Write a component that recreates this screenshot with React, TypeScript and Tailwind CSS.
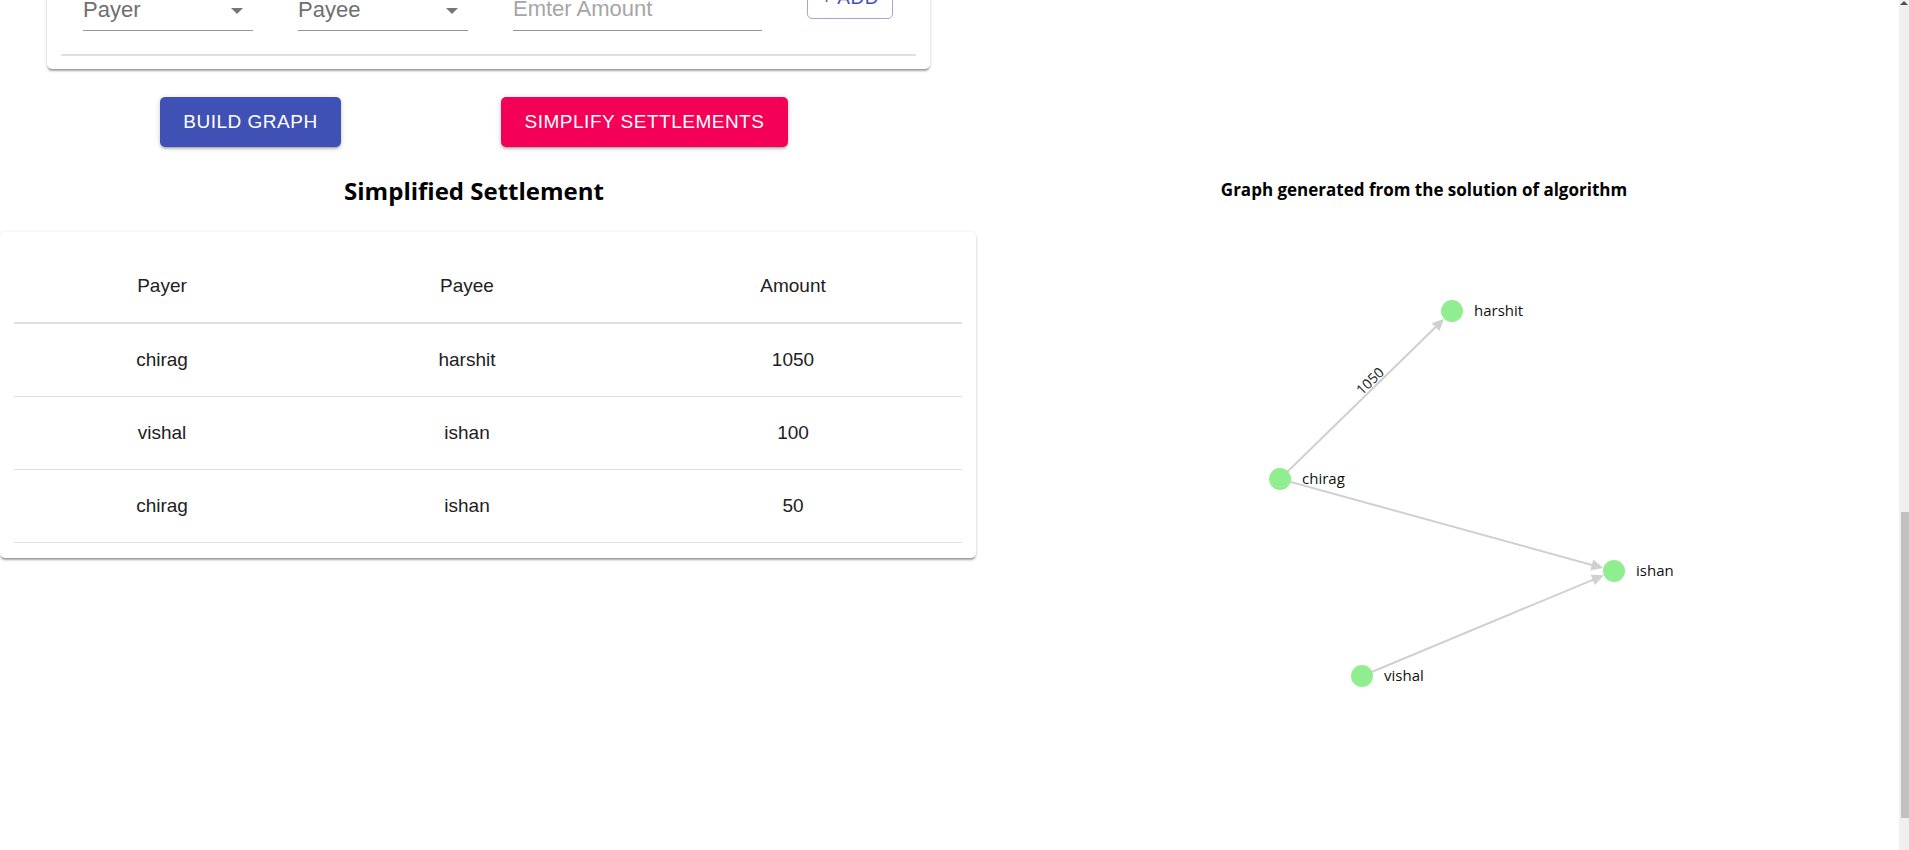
import React from "react";

type Pt = [number, number];

const nodes: Record<string, Pt> = {
  harshit: [1452, 311],
  chirag: [1280, 479],
  ishan: [1614, 571],
  vishal: [1362, 676],
};

const edges = [
  { from: "chirag", to: "harshit" },
  { from: "chirag", to: "ishan" },
  { from: "vishal", to: "ishan" },
];

const rows = [
  { payer: "chirag", payee: "harshit", amount: 1050 },
  { payer: "vishal", payee: "ishan", amount: 100 },
  { payer: "chirag", payee: "ishan", amount: 50 },
];

const R = 11;

function Edge({ from, to }: { from: Pt; to: Pt }) {
  const dx = to[0] - from[0];
  const dy = to[1] - from[1];
  const len = Math.hypot(dx, dy);
  const ux = dx / len;
  const uy = dy / len;
  const tip: Pt = [to[0] - ux * R, to[1] - uy * R];
  const base: Pt = [tip[0] - ux * 12, tip[1] - uy * 12];
  const nx = -uy * 5.5;
  const ny = ux * 5.5;
  return (
    <g>
      <line x1={from[0]} y1={from[1]} x2={base[0] + ux * 2} y2={base[1] + uy * 2} stroke="#d0d0d0" strokeWidth={2} />
      <polygon
        points={`${tip[0]},${tip[1]} ${base[0] + nx},${base[1] + ny} ${base[0] - nx},${base[1] - ny}`}
        fill="#d0d0d0"
      />
    </g>
  );
}

function Graph() {
  return (
    <svg width={923} height={620} viewBox="976 220 923 620" className="block">
      {edges.map((e) => (
        <Edge key={e.from + e.to} from={nodes[e.from]} to={nodes[e.to]} />
      ))}
      <text
        transform="translate(1373.5,384.6) rotate(-44.3)"
        textAnchor="middle"
        fontSize={14}
        fill="#222"
        fontFamily="'Open Sans', sans-serif"
      >
        1050
      </text>
      {Object.entries(nodes).map(([name, [x, y]]) => (
        <g key={name}>
          <circle cx={x} cy={y} r={R} fill="#90ee90" />
          <text x={x + 22} y={y + 5} fontSize={15} fill="#111" fontFamily="'Open Sans', sans-serif">
            {name}
          </text>
        </g>
      ))}
    </svg>
  );
}

function SelectField({ label }: { label: string }) {
  return (
    <div className="w-[170px] h-[30px] border-b border-[#949494] flex items-end justify-between pb-[11px]">
      <span className="leading-[18px] text-[22px] text-[#6f6f6f]">{label}</span>
      <svg width="12" height="6" className="mr-[10px] mb-[5px]">
        <polygon points="0,0 12,0 6,6" fill="#767676" />
      </svg>
    </div>
  );
}

export default function App() {
  return (
    <div className="flex w-full h-[850px] overflow-hidden bg-white font-['Liberation_Sans',Arial,sans-serif]">
      <div className="flex-1 min-w-0">
        {/* Add transaction card */}
        <div className="ml-[47px] w-[883px] -mt-[40px] bg-white rounded-[5px] shadow-[0_3px_2px_-1px_rgba(0,0,0,0.25),0_1px_2px_0_rgba(0,0,0,0.14),0_1px_4px_0_rgba(0,0,0,0.12)]">
          <div className="flex items-end h-[71px] gap-[45px] pl-[36px]">
            <SelectField label="Payer" />
            <SelectField label="Payee" />
            <div className="w-[249px] h-[30px] border-b border-[#949494] flex items-end pb-[12px]">
              <span className="leading-[18px] text-[22px] text-[#a6a6a6]">Emter Amount</span>
            </div>
            <button className="mb-[12px] h-[46px] w-[86px] pt-[4px] flex items-center justify-center rounded-[5px] border border-[#9fa8da] text-[#3f51b5] text-[19px] tracking-[0.5px]">
              + ADD
            </button>
          </div>
          <div className="mx-[14px] mt-[23px] h-[2px] bg-[#e0e0e0]" />
          <div className="h-[13px]" />
        </div>

        {/* Action buttons */}
        <div className="flex mt-[28px]">
          <button className="ml-[160px] w-[181px] h-[50px] rounded-[5px] bg-[#3f51b5] text-white text-[19px] tracking-[0.5px] shadow-[0_3px_2px_-2px_rgba(0,0,0,0.2),0_2px_3px_0_rgba(0,0,0,0.14),0_1px_6px_0_rgba(0,0,0,0.12)]">
            BUILD GRAPH
          </button>
          <button className="ml-[160px] w-[287px] h-[50px] rounded-[5px] bg-[#f50057] text-white text-[19px] tracking-[0.5px] shadow-[0_3px_2px_-2px_rgba(0,0,0,0.2),0_2px_3px_0_rgba(0,0,0,0.14),0_1px_6px_0_rgba(0,0,0,0.12)]">
            SIMPLIFY SETTLEMENTS
          </button>
        </div>

        <div className="flex">
          {/* Settlement table */}
          <div className="w-[976px] shrink-0">
            <h2 className="mt-[28px] pr-[28px] h-[32px] leading-[32px] text-center text-[24px] font-bold text-black font-['Open_Sans',sans-serif]">
              Simplified Settlement
            </h2>
            <div className="mt-[25px] bg-white rounded-[5px] pt-[19px] pb-[15px] px-[14px] shadow-[0_3px_2px_-1px_rgba(0,0,0,0.25),0_1px_2px_0_rgba(0,0,0,0.14),0_1px_4px_0_rgba(0,0,0,0.12)]">
              <div className="grid grid-cols-[296px_314px_338px] h-[73px] items-center border-b-2 border-[#e0e0e0] text-[19px] text-[#212121] text-center">
                <div>Payer</div>
                <div>Payee</div>
                <div>Amount</div>
              </div>
              {rows.map((r, i) => (
                <div
                  key={i}
                  className="grid grid-cols-[296px_314px_338px] h-[73px] items-center border-b border-[#e0e0e0] text-[19px] text-[#212121] text-center"
                >
                  <div>{r.payer}</div>
                  <div>{r.payee}</div>
                  <div>{r.amount}</div>
                </div>
              ))}
            </div>
          </div>

          {/* Graph */}
          <div className="flex-1 min-w-0">
            <h3 className="mt-[31px] pr-[27px] h-[24px] leading-[24px] text-center text-[17px] font-bold text-black font-['Open_Sans',sans-serif]">
              Graph generated from the solution of algorithm
            </h3>
            <div className="mt-[18px]">
              <Graph />
            </div>
          </div>
        </div>
      </div>

      {/* Scrollbar */}
      <div className="w-[10px] h-[850px] bg-[#f0f0f0] flex flex-col">
        <svg width="10" height="6" className="block">
          <polygon points="5,1 9,5 1,5" fill="#505050" />
        </svg>
        <div className="mt-[506px] ml-[2px] w-[8px] h-[306px] bg-[#c1c1c1]" />
      </div>
    </div>
  );
}
